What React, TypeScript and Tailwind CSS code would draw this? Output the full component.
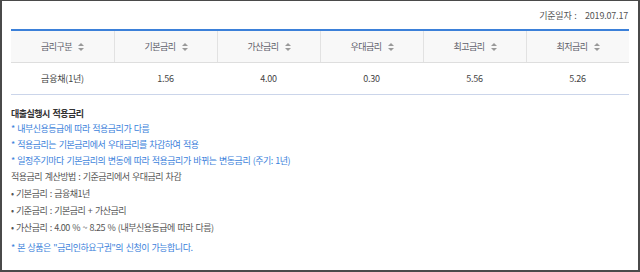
import React from "react";

const font = { fontFamily: '"Noto Sans CJK KR", "Noto Sans", sans-serif' };

function SortIcon() {
  return (
    <svg width="6" height="8" viewBox="0 0 6 8" className="ml-[6px] inline-block">
      <path d="M3 0 L6 3 L0 3 Z" fill="#9a9a9a" />
      <path d="M0 5 L6 5 L3 8 Z" fill="#9a9a9a" />
    </svg>
  );
}

const heads = ["금리구분", "기본금리", "가산금리", "우대금리", "최고금리", "최저금리"];
const vals = ["금융채(1년)", "1.56", "4.00", "0.30", "5.56", "5.26"];

export default function App() {
  return (
    <div
      className="w-[640px] h-[272px] box-border bg-white border-[#4a4a4a] border-t border-x-2 border-b-2 px-[9px] text-[9px] tracking-[-0.5px] [word-spacing:1px]"
      style={font}
    >
      <div className="flex justify-end pt-[9px] leading-[12px] text-[#555] mb-[7px] pr-[1px]">
        <span className="tracking-[-0.2px]">기준일자 :&nbsp;&nbsp; 2019.07.17</span>
      </div>
      <div className="border-t-2 border-[#3b80d9]">
        <div className="grid grid-cols-6 h-[32px] bg-[#f8f8f8] border-b border-[#dedede] text-[#5e5e6a]">
          {heads.map((h, i) => (
            <div
              key={h}
              className={`flex items-center justify-center ${i > 0 ? "border-l border-[#e2e2e2]" : ""}`}
            >
              <span>{h}</span>
              <SortIcon />
            </div>
          ))}
        </div>
        <div className="grid grid-cols-6 h-[32px] border-b border-[#cbd5ea] text-[#444] tracking-[-0.2px]">
          {vals.map((v, i) => (
            <div key={i} className="flex items-center justify-center">
              {v}
            </div>
          ))}
        </div>
      </div>
      <div className="mt-[11px] text-[#555]">
        <div className="leading-[15px] font-semibold text-[#333]">대출실행시 적용금리</div>
        <div className="leading-[16px] text-[#3b7fdb]">* 내부신용등급에 따라 적용금리가 다름</div>
        <div className="leading-[16px] text-[#3b7fdb]">* 적용금리는 기본금리에서 우대금리를 차감하여 적용</div>
        <div className="leading-[16px] text-[#3b7fdb]">
          * 일정주기마다 기본금리의 변동에 따라 적용금리가 바뀌는 변동금리 (주기: 1년)
        </div>
        <div className="leading-[16px]">적용금리 계산방법 : 기준금리에서 우대금리 차감</div>
        <div className="leading-[17px]">• 기본금리 : 금융채1년</div>
        <div className="leading-[17px]">• 기준금리 : 기본금리 + 가산금리</div>
        <div className="leading-[17px]">• 가산금리 : 4.00 % ~ 8.25 % (내부신용등급에 따라 다름)</div>
        <div className="mt-[4px] leading-[16px] text-[#3b7fdb]">
          * 본 상품은 "금리인하요구권"의 신청이 가능합니다.
        </div>
      </div>
    </div>
  );
}
